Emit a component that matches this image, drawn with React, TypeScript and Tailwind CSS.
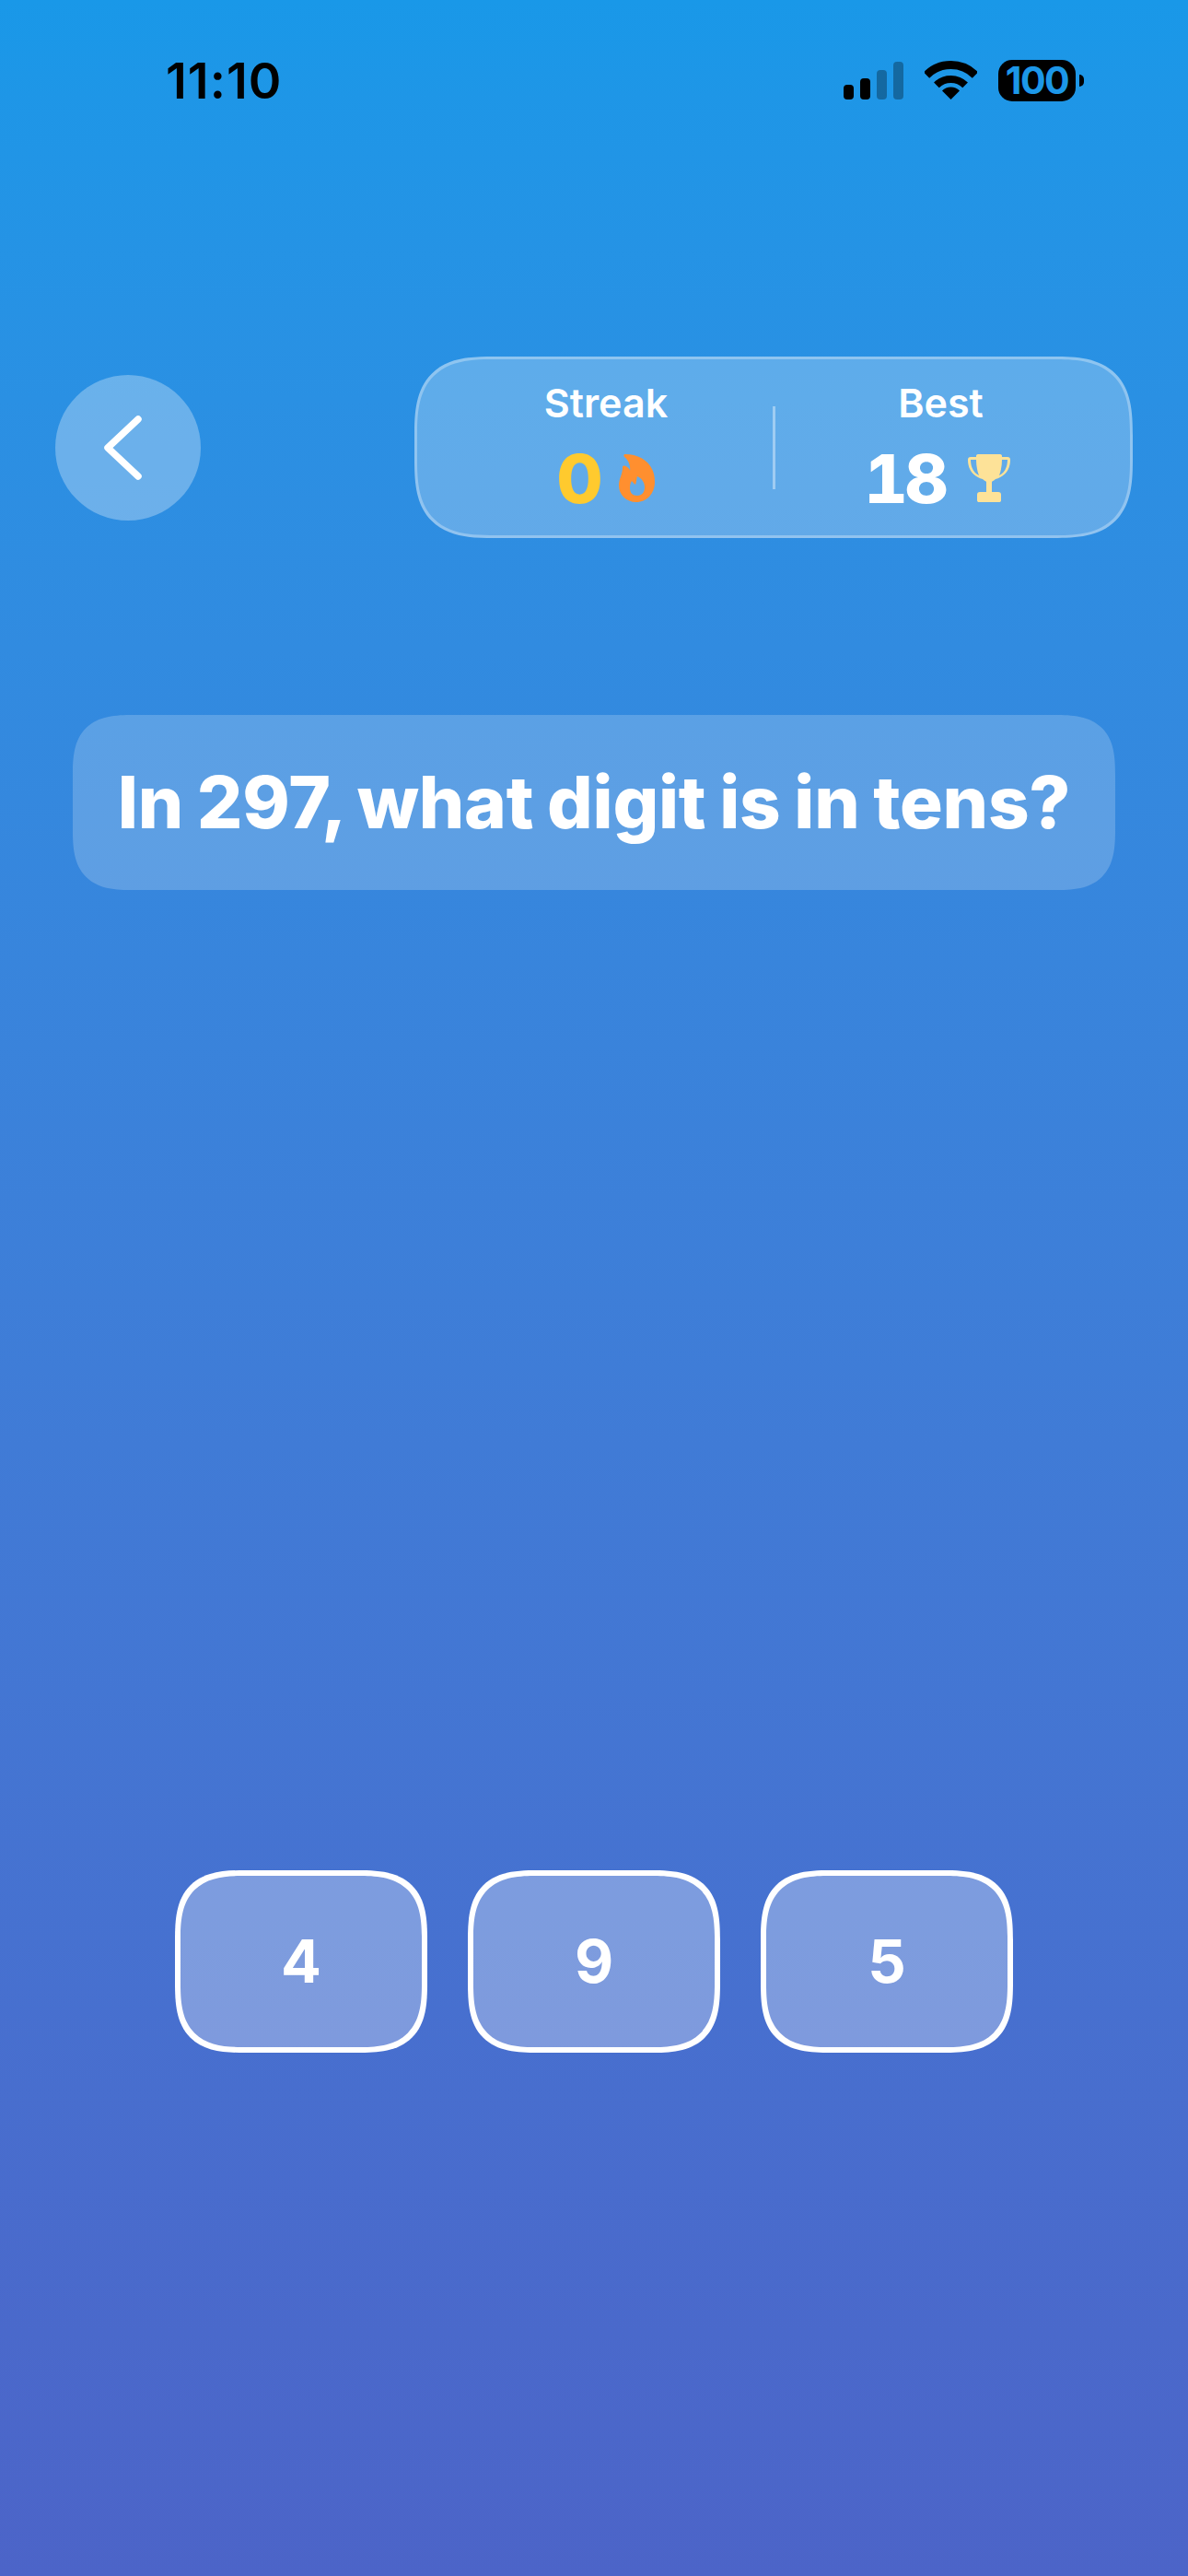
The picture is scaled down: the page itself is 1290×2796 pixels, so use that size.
import React from 'react';

const FONT = "font-['Inter','Noto_Sans',sans-serif]";

const Wifi = () => (
  <svg width="57" height="42" viewBox="0 0 57 42" fill="none" className="block">
    <path d="M2 15.5 A37.5 37.5 0 0 1 55 15.5" stroke="#000" strokeWidth="9" />
    <path d="M12.9 26.4 A22 22 0 0 1 44.1 26.4" stroke="#000" strokeWidth="8" />
    <path d="M28.5 42 L19 32.5 A13.4 13.4 0 0 1 38 32.5 Z" fill="#000" />
  </svg>
);

const Flame = () => (
  <svg width="40" height="52" viewBox="0 0 40 52" className="block">
    <path
      fillRule="evenodd"
      fill="#ff8f2f"
      d="M7 0 C24 0 39 10 39 30 C39 43 30 52 19 52 C8 52 0 44 0 34 C0 26 4 23 4 14 C4 12 7 12 9 14 C11 15 12 17 12 18 C13 12 10 6 6 3 C5 2 5 0 7 0 Z M20 24 C19 27 19 31 18 33 C16 32 15 30 14 29 C12 32 12 35 12 37 C12 42 15 45 20 45 C25 45 28 41 28 36 C28 31 25 26 20 24 Z"
    />
  </svg>
);

const Trophy = () => (
  <svg width="46" height="52" viewBox="0 0 46 52" className="block">
    <path fill="#fde298" d="M11 0 H35 C36.500 0 37 1 37 2 V3 H43 C45 3 46 4 46 6 C46 16 41 24 30 27 C28.500 28.500 27 29 26 30 V41 H33 C35 41 36 42 36 44 V50 C36 51.500 35 52 34 52 H12 C11 52 10 51.500 10 50 V44 C10 42 11 41 13 41 H20 V30 C19 29 17.500 28.500 16 27 C5 24 0 16 0 6 C0 4 1 3 3 3 H9 V2 C9 1 9.500 0 11 0 Z M3 6 C3 14 6 20 12 23 C10 18 9 12 9 6 Z M43 6 H37 C37 12 36 18 34 23 C40 20 43 14 43 6 Z" />
  </svg>
);

const Stat = ({ label, children }: { label: string; children: React.ReactNode }) => (
  <div className="flex flex-col items-center mb-[9px]">
    <span className="text-[43px] leading-[50px] font-semibold text-white">{label}</span>
    {children}
  </div>
);

const AnswerButton = ({ value }: { value: string }) => (
  <button className="w-[274px] h-[198px] rounded-[76px] [corner-shape:superellipse(1.5)] border-[6px] border-white bg-white/30 flex items-center justify-center text-white text-[65px] font-bold">
    {value}
  </button>
);

export default function App() {
  return (
    <div className={`w-[1290px] h-[2796px] flex flex-col bg-gradient-to-b from-[#1998e8] to-[#4c64c8] ${FONT}`}>
      {/* status bar */}
      <div className="h-[64px] mt-[55px] pl-[180px] pr-[113px] flex items-center justify-between">
        <span className="text-[54px] leading-none font-semibold text-black tracking-[1px] mt-[2px]">11:10</span>
        <div className="flex items-center">
          <div className="flex items-end gap-[7px] h-[41px] mt-[1px]">
            <div className="w-[11px] h-[16px] rounded-[4px] bg-black" />
            <div className="w-[11px] h-[23px] rounded-[4px] bg-black" />
            <div className="w-[11px] h-[32px] rounded-[4px] bg-black/30" />
            <div className="w-[11px] h-[41px] rounded-[4px] bg-black/30" />
          </div>
          <div className="ml-[23px]"><Wifi /></div>
          <div className="ml-[23px] w-[84px] h-[45px] rounded-[15px] bg-black flex items-center justify-center text-[#1c97e8] text-[41px] font-bold leading-none tracking-[-1.5px]">
            100
          </div>
          <div className="ml-[4px] w-[5px] h-[13px] rounded-r-[5px] bg-black" />
        </div>
      </div>

      {/* header row */}
      <div className="mt-[268px] pl-[60px] pr-[60px] flex items-center justify-between">
        <button className="w-[158px] h-[158px] rounded-full bg-white/30 flex items-center justify-center">
          <svg width="44" height="72" viewBox="0 0 44 72" fill="none" className="block mr-[11px]">
            <path d="M38 5 L5 36 L38 67" stroke="#fff" strokeWidth="7.5" strokeLinecap="round" strokeLinejoin="round" />
          </svg>
        </button>
        <div className="w-[780px] h-[197px] rounded-[86px] [corner-shape:superellipse(1.5)] border-[3px] border-white/30 bg-white/25 flex items-center">
          <div className="w-[386px] flex justify-center pl-[24px]">
            <Stat label="Streak">
              <div className="flex items-center gap-[17px] mt-[26px] h-[62px]">
                <span className="text-[73px] leading-none font-extrabold text-[#ffca2e]">0</span>
                <Flame />
              </div>
            </Stat>
          </div>
          <div className="w-[3px] h-[90px] bg-white/40" />
          <div className="flex-1 flex justify-center pr-[26px]">
            <Stat label="Best">
              <div className="flex items-center gap-[24px] mt-[26px] h-[62px] mr-[8px]">
                <span className="text-[73px] leading-none font-extrabold text-white tabular-nums tracking-[-3px]">18</span>
                <Trophy />
              </div>
            </Stat>
          </div>
        </div>
      </div>

      {/* question */}
      <div className="mt-[192px] mx-[79px] h-[190px] rounded-[66px] [corner-shape:superellipse(1.5)] bg-white/20 flex items-center justify-center">
        <span className="text-[78px] font-[850] leading-none text-white tracking-[-0.25px] [word-spacing:-2px] whitespace-nowrap">In 297, what digit is in tens?</span>
      </div>

      {/* answers */}
      <div className="mt-[1064px] flex justify-center gap-[44px]">
        <AnswerButton value="4" />
        <AnswerButton value="9" />
        <AnswerButton value="5" />
      </div>
    </div>
  );
}
